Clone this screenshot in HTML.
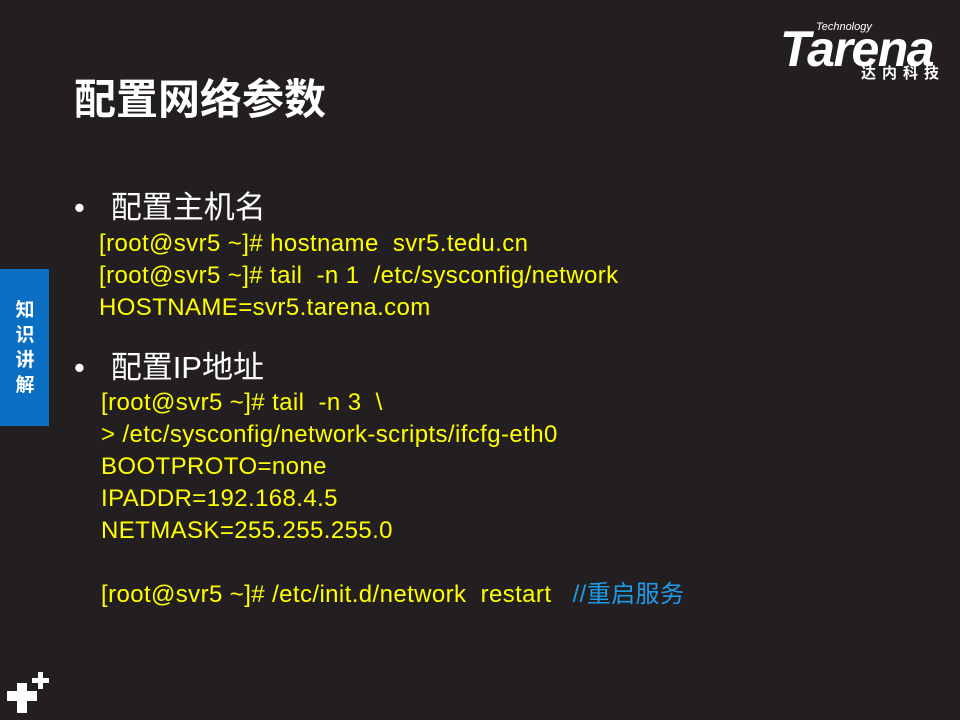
<!DOCTYPE html>
<html><head><meta charset="utf-8"><style>
body{margin:0;width:960px;height:720px;background:#231f20;overflow:hidden;position:relative;font-family:"Liberation Sans","Noto Sans CJK SC",sans-serif}
.a{position:absolute;white-space:nowrap}
.t{left:74px;top:66px;font-size:42px;font-weight:bold;color:#fff}
.b{font-size:31px;color:#fff}
.c{font-size:24px;color:#ffff00;line-height:32px;letter-spacing:0.4px}
.w{background:#fff;position:absolute}
</style></head><body>
<div class="a t">配置网络参数</div>
<div class="a" style="color:#fff;font-size:11px;left:816px;top:21px;font-style:italic">Technology</div>
<div class="a" style="left:780px;top:20px;color:#fff;font-size:50px;font-weight:bold;font-style:italic;letter-spacing:-1.5px">Tarena</div>
<div class="a" style="left:861px;top:62px;color:#fff;font-size:15px;font-weight:bold;letter-spacing:6px">达内科技</div>
<div class="a b" style="left:74px;top:182px">•&nbsp;&nbsp;&nbsp;配置主机名</div>
<div class="a c" style="left:99px;top:228px">[root@svr5 ~]# hostname&nbsp; svr5.tedu.cn<br>[root@svr5 ~]# tail&nbsp; -n 1&nbsp; /etc/sysconfig/network<br>HOSTNAME=svr5.tarena.com</div>
<div class="a b" style="left:74px;top:342px">•&nbsp;&nbsp;&nbsp;配置IP地址</div>
<div class="a c" style="left:101px;top:387px">[root@svr5 ~]# tail&nbsp; -n 3&nbsp; \<br>&gt; /etc/sysconfig/network-scripts/ifcfg-eth0<br>BOOTPROTO=none<br>IPADDR=192.168.4.5<br>NETMASK=255.255.255.0<br><br>[root@svr5 ~]# /etc/init.d/network&nbsp; restart&nbsp;&nbsp; <span style="color:#1e9be8">//重启服务</span></div>
<div class="a" style="left:0;top:269px;width:49px;height:157px;background:#0a6fc2"></div>
<div class="a" style="left:13px;top:298px;width:24px;color:#fff;font-size:19px;font-weight:bold;line-height:25px;text-align:center;white-space:normal">知识讲解</div>
<div class="w" style="left:7px;top:691px;width:30px;height:10px"></div>
<div class="w" style="left:17px;top:683px;width:10px;height:30px"></div>
<div class="w" style="left:32px;top:678px;width:17px;height:5px"></div>
<div class="w" style="left:38px;top:672px;width:5px;height:17px"></div>
</body></html>
